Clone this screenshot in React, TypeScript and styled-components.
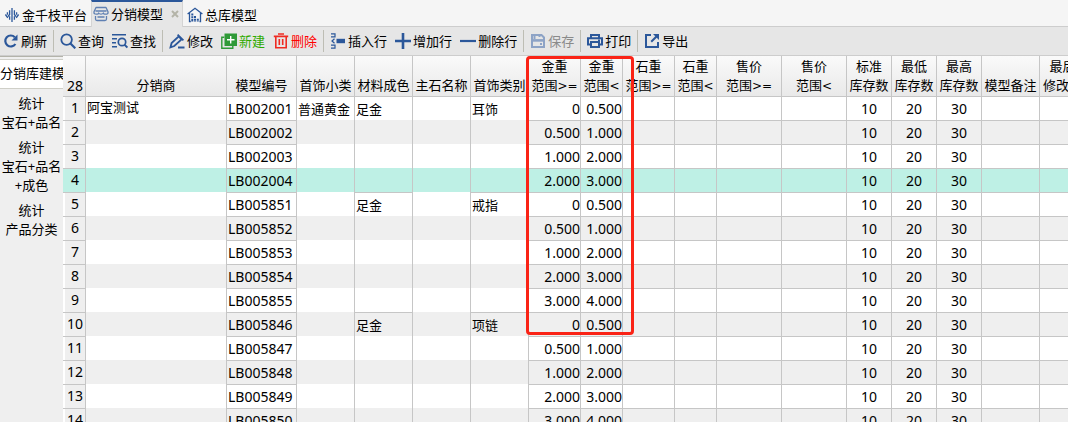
import React from "react";
import styled, { createGlobalStyle, css } from "styled-components";

const BLUE = "#2b579a";
const LINE = "#c6c6c6";
const SELECTED = "#bef0e5";

const GlobalStyle = createGlobalStyle`
  * { box-sizing: border-box; }
  body {
    margin: 0;
    overflow: hidden;
    background: #efefef;
    color: #000;
    font: 13px/19px "Noto Sans", "Noto Sans CJK SC", sans-serif;
  }
  button { font: inherit; color: inherit; border: 0; background: none; padding: 0; margin: 0; }
`;

const Page = styled.div`
  display: flex;
  flex-direction: column;
  height: 100vh;
  overflow: hidden;
`;

const TabBar = styled.nav`
  display: flex;
  height: 27px;
  flex: none;
  background: #f5f5f5;
`;

const TabFiller = styled.div`
  flex: 1;
  border-bottom: 1px solid #cdcdcd;
`;

const TabItem = styled.div<{ $active?: boolean }>`
  display: flex;
  align-items: center;
  gap: 8px;
  padding: 4px 4px 0;
  border-bottom: 1px solid #cdcdcd;
  ${(p) =>
    p.$active &&
    css`
      padding: 0 3px 1px 1px;
      background: #e6e6e6;
      border: solid #d4d4d4;
      border-width: 0 1px;
      border-top: 2px solid ${BLUE};
    `}
`;

const TabButton = styled.button`
  display: flex;
  align-items: center;
  gap: 2px;
  white-space: nowrap;
`;

const CloseButton = styled.button`
  display: flex;
  width: 8px;
  height: 8px;
`;

const Toolbar = styled.div`
  display: flex;
  align-items: center;
  gap: 2px;
  flex: none;
  height: 29px;
  background: #e6e6e6;
  border-bottom: 1px solid #cdcdcd;
`;

const ToolButton = styled.button<{ $color?: string }>`
  display: flex;
  align-items: center;
  gap: 2px;
  padding: 0 3px;
  white-space: nowrap;
  color: ${(p) => p.$color ?? "#000"};
`;

const Separator = styled.span`
  width: 1px;
  height: 22px;
  margin: 0 1px;
  background: #bdbdb4;
`;

const Body = styled.div`
  display: flex;
  flex: 1;
  min-height: 0;
`;

const Sidebar = styled.aside`
  display: flex;
  flex-direction: column;
  flex: none;
  width: 63px;
  overflow: hidden;
  border-top: 1px solid #b3b3aa;
  padding-top: 2px;
`;

const SideButton = styled.button<{ $active?: boolean }>`
  padding: 3px 0;
  white-space: pre;
  text-align: center;
  flex: none;
  ${(p) =>
    p.$active &&
    css`
      padding: 4px 0 5px;
      margin-bottom: 2px;
      background: #fff;
      border: solid #cfcfc8;
      border-width: 1px 0;
    `}
`;

const GridPane = styled.main`
  position: relative;
  flex: 1;
  min-width: 0;
  overflow: hidden;
  background: #fff;
`;

const Table = styled.table`
  width: 1023px;
  table-layout: fixed;
  border-collapse: separate;
  border-spacing: 0;
`;

const HeadCell = styled.th`
  height: 40px;
  padding: 0 0 1px;
  border-right: 1px solid ${LINE};
  background: linear-gradient(#fafafa, #e9e9e9);
  font-weight: 400;
  vertical-align: bottom;
  text-align: center;
  white-space: pre;
`;

const CountCell = styled(HeadCell)`
  font-size: 14px;
  padding-left: 2px;
`;

const Row = styled.tr<{ $selected: boolean }>`
  background: ${(p) => (p.$selected ? SELECTED : "#fff")};
  &:nth-child(even) {
    background: ${(p) => (p.$selected ? SELECTED : "#efefef")};
  }
`;

const RowNumber = styled.th<{ $selected: boolean }>`
  height: 24px;
  padding: 0 0 3px 2px;
  border-top: 1px solid ${LINE};
  border-right: 1px solid ${LINE};
  background: ${(p) => (p.$selected ? SELECTED : "#efefef")};
  box-shadow: ${(p) => (p.$selected ? "none" : "inset 2px 0 #fff")};
  font-size: 14px;
  font-weight: 400;
  text-align: center;
`;

const Cell = styled.td<{ $align: Align; $line: boolean; $raised?: boolean }>`
  height: 24px;
  padding: ${(p) => (p.$raised ? "0 0 3px" : "1px 0 0")};
  padding-left: ${(p) => (p.$align === "left" ? 1 : 0)}px;
  border-right: 1px solid ${LINE};
  border-top: ${(p) => (p.$line ? `1px solid ${LINE}` : "0")};
  font-size: ${(p) => (p.$align === "left" ? 13 : 14)}px;
  line-height: 20px;
  text-align: ${(p) => p.$align};
  white-space: nowrap;
`;

const Code = styled.span`
  font-size: 14px;
`;

const Operator = styled.span`
  font-family: "DejaVu Sans", sans-serif;
  font-size: 12px;
  line-height: 12px;
`;

const Highlight = styled.div`
  position: absolute;
  left: 463px;
  top: 0;
  width: 108px;
  height: 279px;
  border: 3px solid #fa2316;
  border-radius: 4px;
  pointer-events: none;
`;

const Glyph = styled.svg`
  display: block;
  flex: none;
`;

type Align = "left" | "center" | "right";

function Label({ text }: { text: string }) {
  return (
    <>
      {text.split(/([<>=]+)/).map((part, i) => (i % 2 ? <Operator key={i}>{part}</Operator> : part))}
    </>
  );
}

function Icon({ children, color = BLUE }: { children: React.ReactNode; color?: string }) {
  return (
    <Glyph width="16" height="16" viewBox="0 0 16 16" fill="none" stroke={color} strokeWidth="2" aria-hidden="true">
      {children}
    </Glyph>
  );
}

const icons = {
  brand: (
    <Icon>
      <path strokeWidth="1.3" d="M8 1v14M5.6 3.2v4.3L4 9.5M10.4 3.2v4.3l1.6 2M3.4 5.2v2.6M12.6 5.2v2.6M5.6 9.2v3.6M10.4 9.2v3.6M1.4 7.5l2.4 3.3M14.6 7.5l-2.4 3.3" />
    </Icon>
  ),
  shop: (
    <Icon color="#5f80b3">
      <path strokeWidth="1.3" strokeLinejoin="round" d="M3 1.5h10l2 4.2v1q0 1.5-2.3 1.5T10.4 7q-.8 1.2-2.4 1.2T5.6 7q0 1.2-2.3 1.2T1 6.7v-1zM2.5 5h11M2.5 10v3q0 1.5 1.5 1.5h8q1.5 0 1.5-1.5v-3M4.5 11h7" />
    </Icon>
  ),
  warehouse: (
    <Icon>
      <path strokeWidth="1.3" d="M.6 7 8 1.3 15.4 7M2.5 6v8.5h1.3M13.5 6v8.5h-1" />
      <path strokeWidth="2" strokeDasharray="2 .7" d="M5.3 6.5V15M8 9V15M10.8 11.8V15" />
    </Icon>
  ),
  refresh: (
    <Icon>
      <path strokeWidth="2.2" d="M11.8 4.2A5.5 5.5 0 1 0 12.4 11" />
      <path fill={BLUE} stroke="none" d="M14.5 1.5v6h-6z" />
    </Icon>
  ),
  search: (
    <Icon>
      <circle cx="6.6" cy="6.6" r="5.3" strokeWidth="1.8" />
      <path d="m10.5 10.5 4.8 4.8" strokeWidth="2.2" />
    </Icon>
  ),
  find: (
    <Icon>
      <path strokeWidth="1.6" d="M0 1.8h14M0 5.8h5M0 9.8h4M0 13.8h5" />
      <circle cx="10" cy="9" r="3.7" strokeWidth="1.7" />
      <path d="m12.4 11.6 3 3" />
    </Icon>
  ),
  edit: (
    <Icon>
      <path strokeWidth="1.8" d="M1.5 14.3 2.6 10 9.8 3.4l2.7 3L5.3 13zM8.6 1.6l5.8 5.8M9 14.5h6.5" />
    </Icon>
  ),
  create: (
    <Icon color="#2f9a38">
      <path strokeWidth="1.4" d="M3.3 4.2H.8v11h11v-2.5" />
      <path fill="#2f9a38" stroke="none" d="M3.5.5H16V13H3.5z" />
      <path stroke="#fff" strokeWidth="1.4" d="M9.7 3v7.6M6 6.8h7.5" />
    </Icon>
  ),
  remove: (
    <Icon color="#ef2b22">
      <path strokeWidth="1.6" d="M.8 3.4h14.4M5 1h6M2.8 3.5v11.2h10.4V3.5M6.3 6v6M9.7 6v6" />
    </Icon>
  ),
  insert: (
    <Icon>
      <path strokeWidth="1.2" d="M1 .8h4v3H1M1 15.2h4v-3H1M4.5 5.8 2 8l2.5 2.2" />
      <path strokeWidth="4.4" d="M6.5 8H15" />
    </Icon>
  ),
  plus: (
    <Icon>
      <path strokeWidth="2.6" d="M8 0v16M0 8h16" />
    </Icon>
  ),
  minus: (
    <Icon>
      <path strokeWidth="2.2" d="M0 8h16" />
    </Icon>
  ),
  save: (
    <Icon color="#8da3c6">
      <path strokeWidth="2" d="M2 2h9.5L14 4.5V14H2z" />
      <path strokeWidth="2.6" d="M2 7.4h12" />
      <path strokeWidth="2" d="M4.5 2v4M9.5 2v2M10 11h2" />
    </Icon>
  ),
  print: (
    <Icon>
      <path d="M4 5V2h8v3M3.5 11.5H1V5.3h14v6.2h-2.5M4 9h8v5H4z" />
      <path strokeWidth="1.4" d="M11 7.2h2" />
    </Icon>
  ),
  exportOut: (
    <Icon>
      <path d="M7 2H2v12h12V9" />
      <path fill={BLUE} stroke="none" d="M9 1h6v6z" />
      <path d="M13.2 2.8 7.2 8.8" />
    </Icon>
  ),
};

interface Tool {
  label: string;
  icon: React.ReactNode;
  color?: string;
  disabled?: boolean;
}

const toolGroups: Tool[][] = [
  [{ label: "刷新", icon: icons.refresh }],
  [
    { label: "查询", icon: icons.search },
    { label: "查找", icon: icons.find },
  ],
  [
    { label: "修改", icon: icons.edit },
    { label: "新建", icon: icons.create, color: "#2faa00" },
    { label: "删除", icon: icons.remove, color: "#ff0000" },
  ],
  [
    { label: "插入行", icon: icons.insert },
    { label: "增加行", icon: icons.plus },
    { label: "删除行", icon: icons.minus },
  ],
  [{ label: "保存", icon: icons.save, color: "#8a8a8a", disabled: true }],
  [{ label: "打印", icon: icons.print }],
  [{ label: "导出", icon: icons.exportOut }],
];

const views = ["分销库建模", "统计\n宝石+品名", "统计\n宝石+品名\n+成色", "统计\n产品分类"];

interface Column {
  key: string;
  title: string;
  width: number;
  align: Align;
  merged?: boolean;
}

const columns: Column[] = [
  { key: "dealer", title: "分销商", width: 141, align: "left", merged: true },
  { key: "code", title: "模型编号", width: 70, align: "left" },
  { key: "subtype", title: "首饰小类", width: 58, align: "left", merged: true },
  { key: "material", title: "材料成色", width: 58, align: "left", merged: true },
  { key: "stone", title: "主石名称", width: 58, align: "left", merged: true },
  { key: "category", title: "首饰类别", width: 58, align: "left", merged: true },
  { key: "goldMin", title: "金重\n范围>=", width: 52, align: "right" },
  { key: "goldMax", title: "金重\n范围<", width: 42, align: "right" },
  { key: "stoneMin", title: "石重\n范围>=", width: 52, align: "right" },
  { key: "stoneMax", title: "石重\n范围<", width: 42, align: "right" },
  { key: "priceMin", title: "售价\n范围>=", width: 65, align: "right" },
  { key: "priceMax", title: "售价\n范围<", width: 65, align: "right" },
  { key: "standard", title: "标准\n库存数", width: 45, align: "center" },
  { key: "lowest", title: "最低\n库存数", width: 45, align: "center" },
  { key: "highest", title: "最高\n库存数", width: 45, align: "center" },
  { key: "remark", title: "模型备注", width: 58, align: "left" },
  { key: "editor", title: "最后\n修改人", width: 46, align: "left" },
];

type Model = Record<string, string>;

const model = (code: string, goldMin: string, goldMax: string, extra: Model = {}): Model => ({
  code,
  goldMin,
  goldMax,
  standard: "10",
  lowest: "20",
  highest: "30",
  ...extra,
});

const models: Model[] = [
  model("LB002001", "0", "0.500", { dealer: "阿宝测试", subtype: "普通黄金", material: "足金", stone: "", category: "耳饰" }),
  model("LB002002", "0.500", "1.000"),
  model("LB002003", "1.000", "2.000"),
  model("LB002004", "2.000", "3.000"),
  model("LB005851", "0", "0.500", { material: "足金", category: "戒指" }),
  model("LB005852", "0.500", "1.000"),
  model("LB005853", "1.000", "2.000"),
  model("LB005854", "2.000", "3.000"),
  model("LB005855", "3.000", "4.000"),
  model("LB005846", "0", "0.500", { material: "足金", category: "项链" }),
  model("LB005847", "0.500", "1.000"),
  model("LB005848", "1.000", "2.000"),
  model("LB005849", "2.000", "3.000"),
  model("LB005850", "3.000", "4.000"),
];

const SELECTED_INDEX = 3;

export default function App() {
  return (
    <>
      <GlobalStyle />
      <Page>
        <TabBar>
          <TabItem>
            <TabButton>{icons.brand}金千枝平台</TabButton>
          </TabItem>
          <TabItem $active>
            <TabButton aria-current="page">{icons.shop}分销模型</TabButton>
            <CloseButton aria-label="关闭">
              <Glyph width="8" height="8" viewBox="0 0 8 8" stroke="#b4b4a8" strokeWidth="2">
                <path d="m1 1 6 6M7 1 1 7" />
              </Glyph>
            </CloseButton>
          </TabItem>
          <TabItem>
            <TabButton>{icons.warehouse}总库模型</TabButton>
          </TabItem>
          <TabFiller />
        </TabBar>

        <Toolbar role="toolbar">
          {toolGroups.map((group, g) => (
            <React.Fragment key={g}>
              {g > 0 && <Separator />}
              {group.map((tool) => (
                <ToolButton key={tool.label} $color={tool.color} disabled={tool.disabled}>
                  {tool.icon}
                  {tool.label}
                </ToolButton>
              ))}
            </React.Fragment>
          ))}
        </Toolbar>

        <Body>
          <Sidebar>
            {views.map((view, i) => (
              <SideButton key={view} $active={i === 0}>
                {view}
              </SideButton>
            ))}
          </Sidebar>

          <GridPane>
            <Table>
              <colgroup>
                <col style={{ width: 23 }} />
                {columns.map((c) => (
                  <col key={c.key} style={{ width: c.width }} />
                ))}
              </colgroup>
              <thead>
                <tr>
                  <CountCell>28</CountCell>
                  {columns.map((c) => (
                    <HeadCell key={c.key} scope="col">
                      <Label text={c.title} />
                    </HeadCell>
                  ))}
                </tr>
              </thead>
              <tbody>
                {models.map((m, i) => (
                  <Row key={m.code} $selected={i === SELECTED_INDEX}>
                    <RowNumber scope="row" $selected={i === SELECTED_INDEX}>
                      {i + 1}
                    </RowNumber>
                    {columns.map((c) => (
                      <Cell
                        key={c.key}
                        $align={c.align}
                        $line={!c.merged || m[c.key] !== undefined}
                        $raised={c.key === "dealer"}
                      >
                        {c.key === "code" ? <Code>{m.code}</Code> : m[c.key]}
                      </Cell>
                    ))}
                  </Row>
                ))}
              </tbody>
            </Table>
            <Highlight />
          </GridPane>
        </Body>
      </Page>
    </>
  );
}
